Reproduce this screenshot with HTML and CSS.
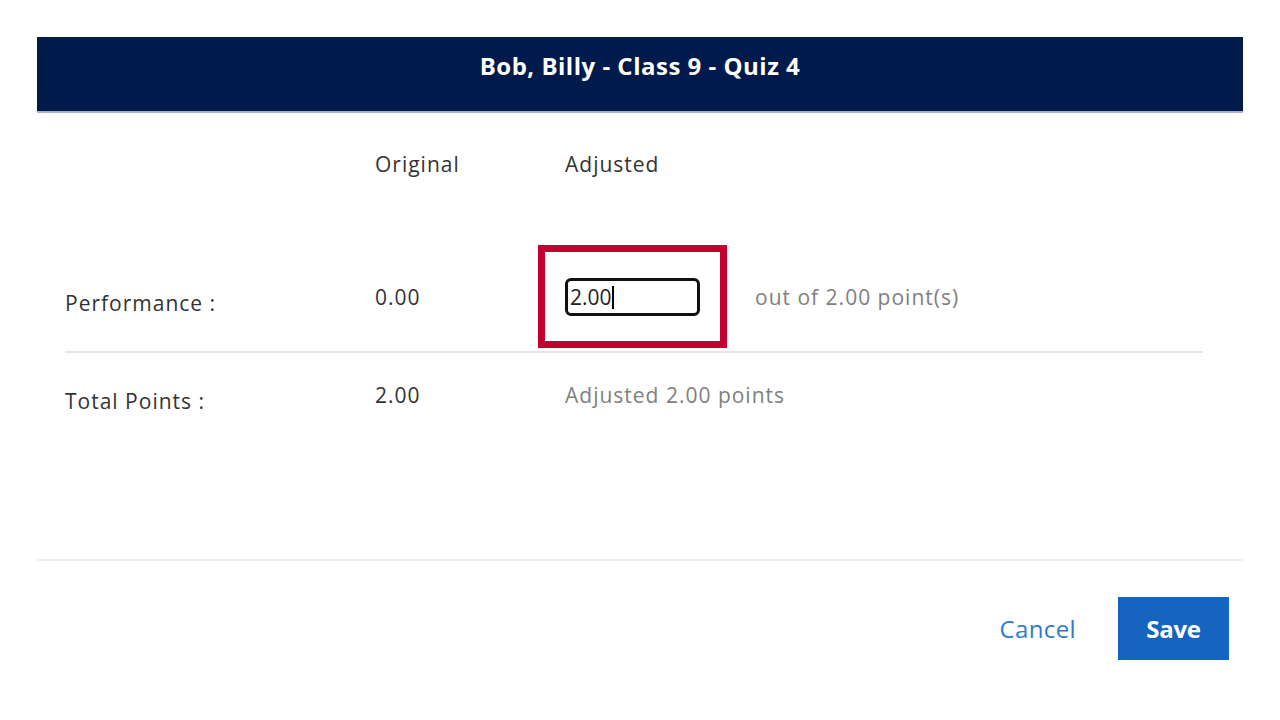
FILE: index.html
```html
<!DOCTYPE html>
<html lang="en">
<head>
    <meta charset="UTF-8">
    <meta name="viewport" content="width=device-width, initial-scale=1.0">
    <title>Adjust Score</title>
    <link rel="stylesheet" href="styles.css">
</head>
<body>
    <div class="modal">
        <div class="modal-header">
            <h2>Bob, Billy - Class 9 - Quiz 4</h2>
        </div>
        <div class="modal-body">
            <div class="row head-row">
                <span></span>
                <span class="col-title">Original</span>
                <span class="col-title">Adjusted</span>
                <span></span>
            </div>
            <div class="row score-row">
                <span class="label">Performance :</span>
                <span class="value">0.00</span>
                <div class="field-cell">
                    <input type="text" class="score-input" value="2.00" autofocus>
                    <span class="caret"></span>
                    <div class="highlight"></div>
                </div>
                <span class="hint">out of 2.00 point(s)</span>
            </div>
            <div class="row total-row">
                <span class="label">Total Points :</span>
                <span class="value">2.00</span>
                <span class="hint wide">Adjusted 2.00 points</span>
            </div>
        </div>
        <div class="modal-footer">
            <button class="btn-cancel">Cancel</button>
            <button class="btn-save">Save</button>
        </div>
    </div>
</body>
</html>
```

FILE: styles.css
```css
body {
    margin: 0;
    background: #fff;
    font-family: "Open Sans", Arial, sans-serif;
    color: #333;
}
.modal {
    margin: 37px 37px 0;
    width: 1206px;
}
.modal-header {
    height: 74px;
    background: #001a4b;
    border-bottom: 2px solid #a9b3c8;
    display: flex;
    align-items: center;
    justify-content: center;
}
.modal-header h2 {
    margin: 0;
    color: #fff;
    font-size: 24px;
    font-weight: bold;
    letter-spacing: 0.5px;
    padding-bottom: 18px;
}
.modal-body {
    padding: 0 40px 0 28px;
}
.row {
    display: grid;
    grid-template-columns: 310px 190px 190px 1fr;
    font-size: 21px;
    letter-spacing: 1px;
    white-space: nowrap;
}
.head-row {
    padding-top: 36px;
    line-height: 30px;
    margin-bottom: 99px;
}
.score-row,
.total-row {
    grid-template-rows: 38px;
    line-height: 38px;
}
.score-row {
    padding-bottom: 35px;
    border-bottom: 2px solid #e6e6e6;
}
.total-row {
    margin-top: 23px;
    padding-bottom: 145px;
}
.label {
    padding-top: 6px;
}
.hint {
    color: #808080;
}
.hint.wide {
    grid-column: span 2;
}
.field-cell {
    position: relative;
    width: 135px;
    height: 38px;
}
.score-input {
    display: block;
    box-sizing: border-box;
    width: 135px;
    height: 38px;
    border: 3px solid #111;
    border-radius: 6px;
    padding: 0 2px;
    font-family: "Open Sans", Arial, sans-serif;
    font-size: 21px;
    letter-spacing: 0;
    color: #222;
    outline: none;
}
.caret {
    position: absolute;
    left: 47px;
    top: 8px;
    width: 2px;
    height: 23px;
    background: #000;
}
.highlight {
    position: absolute;
    top: -33px;
    left: -27px;
    right: -27px;
    bottom: -32px;
    border: 7px solid #c3002f;
    pointer-events: none;
}
.modal-footer {
    border-top: 2px solid #ececec;
    display: flex;
    justify-content: flex-end;
    align-items: center;
    gap: 42px;
    padding: 36px 14px 0 0;
}
.btn-cancel {
    background: none;
    border: none;
    color: #2e7bcc;
    font-family: "Open Sans", Arial, sans-serif;
    font-size: 24px;
    letter-spacing: 0.4px;
    padding: 0;
    cursor: pointer;
}
.btn-save {
    width: 111px;
    height: 63px;
    background: #1565c0;
    border: none;
    color: #fff;
    font-family: "Open Sans", Arial, sans-serif;
    font-size: 24px;
    font-weight: bold;
    letter-spacing: -0.3px;
    cursor: pointer;
}
```
